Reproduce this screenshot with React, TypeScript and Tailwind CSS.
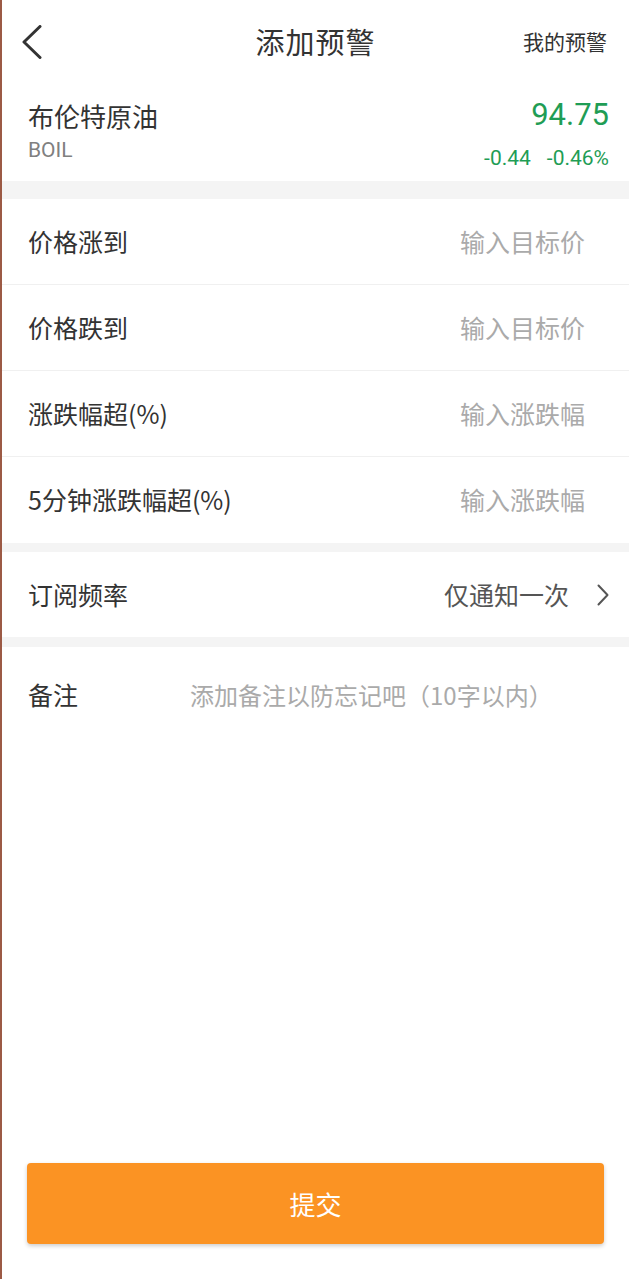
const font = { fontFamily: '"Noto Sans CJK SC", "Noto Sans", sans-serif' }
const latin = { fontFamily: 'Roboto, "Noto Sans CJK SC", sans-serif' }

const inputRows = [
  { label: "价格涨到", placeholder: "输入目标价" },
  { label: "价格跌到", placeholder: "输入目标价" },
  { label: "涨跌幅超(%)", placeholder: "输入涨跌幅" },
  { label: "5分钟涨跌幅超(%)", placeholder: "输入涨跌幅" },
]

export default function App() {
  return (
    <div
      className="h-[1279px] w-full flex flex-col bg-white border-l-2 border-[#9c5a45] text-[#333]"
      style={font}
    >
      {/* header */}
      <div className="h-[84px] flex items-center justify-between pl-[20px] pr-[22px] relative">
        <svg width="20" height="34" viewBox="0 0 20 34" className="-mt-[1px]">
          <polyline points="18,1.5 2,17 18,32.5" fill="none" stroke="#333" strokeWidth="3" strokeLinecap="round" strokeLinejoin="round" />
        </svg>
        <h1 className="absolute left-1/2 -translate-x-1/2 text-[29px] font-normal tracking-[1px]">添加预警</h1>
        <span className="text-[21px] font-normal">我的预警</span>
      </div>

      {/* stock info */}
      <div className="h-[97px] flex justify-between pl-[26px] pr-[20px]">
        <div className="flex flex-col pt-[14px]">
          <span className="text-[26px] leading-[36px]">布伦特原油</span>
          <span className="text-[21px] leading-[26px] text-[#808080] mt-[3px]" style={latin}>BOIL</span>
        </div>
        <div className="flex flex-col items-end pt-[12px] text-[#1f9d55]" style={latin}>
          <span className="text-[31px] leading-[38px]">94.75</span>
          <div className="flex gap-[16px] text-[21px] leading-[24px] mt-[12px]">
            <span>-0.44</span>
            <span>-0.46%</span>
          </div>
        </div>
      </div>

      <div className="h-[18px] bg-[#f4f4f4]" />

      {inputRows.map((row, i) => (
        <div
          key={row.label}
          className={"h-[86px] flex items-center justify-between pl-[26px] pr-[44px] " + (i < inputRows.length - 1 ? "border-b border-[#f0f0f0]" : "")}
        >
          <span className="text-[25px]">{row.label}</span>
          <span className="text-[25px] text-[#aaa]">{row.placeholder}</span>
        </div>
      ))}

      <div className="h-[9px] bg-[#f4f4f4]" />

      <div className="h-[85px] flex items-center justify-between pl-[26px] pr-[20px]">
        <span className="text-[25px]">订阅频率</span>
        <div className="flex items-center gap-[28px] text-[#555]">
          <span className="text-[25px]">仅通知一次</span>
          <svg width="12" height="22" viewBox="0 0 12 22">
            <polyline points="1.5,1.5 10.5,11 1.5,20.5" fill="none" stroke="#555" strokeWidth="2" strokeLinecap="round" strokeLinejoin="round" />
          </svg>
        </div>
      </div>

      <div className="h-[10px] bg-[#f4f4f4]" />

      <div className="h-[96px] flex items-center pl-[26px]">
        <span className="text-[25px] w-[162px]">备注</span>
        <span className="text-[24px] text-[#aaa]">添加备注以防忘记吧（10字以内）</span>
      </div>

      <div className="flex-1" />

      <div className="px-[25px] pb-[35px]">
        <button className="w-full h-[81px] rounded-[4px] bg-[#fb9323] text-white text-[26px] shadow-[0_2px_4px_rgba(0,0,0,0.2)]">
          提交
        </button>
      </div>
    </div>
  )
}
